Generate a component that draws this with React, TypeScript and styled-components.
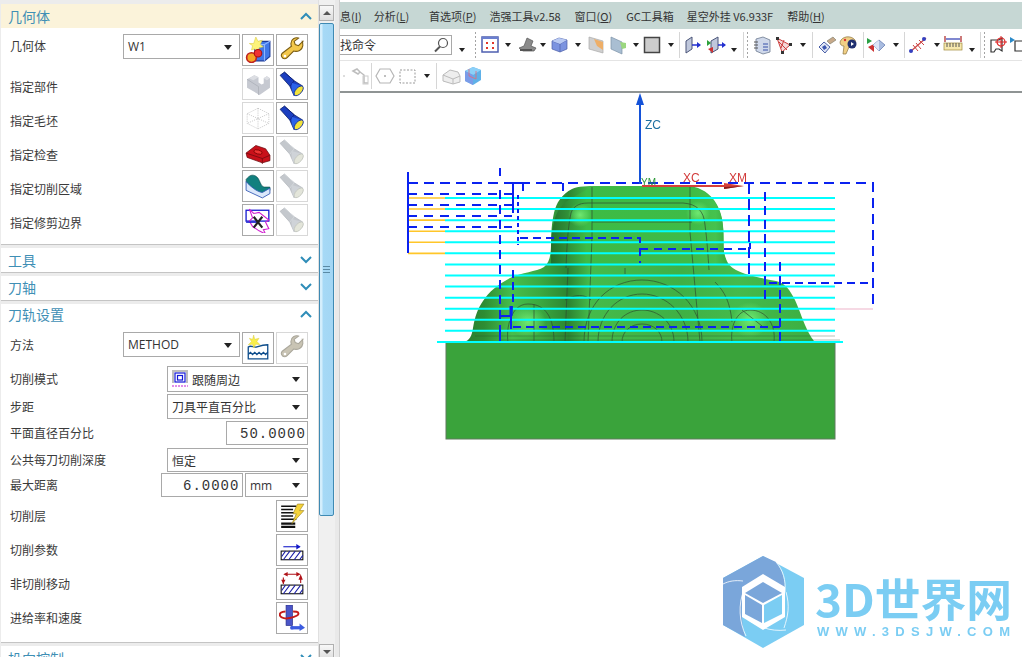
import React from "react";
import styled, { createGlobalStyle } from "styled-components";

const Global = createGlobalStyle`
  html, body { margin: 0; padding: 0; background: #fff; overflow: hidden; }
  #root { width: 1022px; height: 657px; overflow: hidden; }
  * { box-sizing: border-box; }
`;

const Page = styled.div`
  display: flex;
  width: 1022px;
  height: 657px;
  overflow: hidden;
  background: #fff;
  font-family: "Noto Sans CJK SC", "Noto Sans", sans-serif;
  font-size: 12px;
  color: #333;
`;
const Panel = styled.div`
  width: 318px;
  height: 657px;
  flex: none;
  overflow: hidden;
  background: #ececec;
  padding: 4px 0 0 1px;
`;
const Section = styled.section<{ $pb?: number }>`
  background: #fff;
  border-bottom: 1px solid #c4c4c4;
  margin-bottom: 3px;
  padding-bottom: ${(p) => p.$pb ?? 0}px;
`;
const Header = styled.div<{ $active?: boolean; $h?: number; $lift?: number }>`
  height: ${(p) => p.$h ?? 23}px;
  display: flex;
  align-items: center;
  justify-content: space-between;
  padding: 0 6px ${(p) => p.$lift ?? 0}px 7px;
  font-size: 14px;
  color: #3f8fb5;
  background: ${(p) => (p.$active ? "#fbf3da" : "#fff")};
`;
const Chevron = styled.svg`
  width: 12px;
  height: 8px;
  display: block;
`;
const Rows = styled.div<{ $top: number; $gap?: number }>`
  display: flex;
  flex-direction: column;
  gap: ${(p) => p.$gap ?? 2}px;
  padding: ${(p) => p.$top}px 10px 0 9px;
`;
const Row = styled.div<{ $h: number }>`
  height: ${(p) => p.$h}px;
  display: flex;
  align-items: flex-start;
  gap: 2px;
`;
const Label = styled.div<{ $h?: number; $shift?: number }>`
  flex: 1;
  height: ${(p) => p.$h ?? 32}px;
  line-height: ${(p) => p.$h ?? 32}px;
  padding-top: ${(p) => p.$shift ?? 0}px;
  font-size: 12px;
  color: #3a3a3a;
  white-space: nowrap;
`;
const IconBtn = styled.div<{ $off?: boolean }>`
  width: 32px;
  height: 32px;
  flex: none;
  display: flex;
  align-items: center;
  justify-content: center;
  background: #fff;
  border: 1px solid ${(p) => (p.$off ? "#d8d8d8" : "#a9a9a9")};
`;
const Select = styled.div<{ $w: number; $h: number; $font?: string }>`
  width: ${(p) => p.$w}px;
  height: ${(p) => p.$h}px;
  flex: none;
  display: flex;
  align-items: center;
  gap: 3px;
  padding: 0 4px;
  background: #fff;
  border: 1px solid #a9a9a9;
  font-family: ${(p) => p.$font ?? '"Noto Sans CJK SC", sans-serif'};
  font-size: 12px;
  color: #333;
  position: relative;
  &::after {
    content: "";
    position: absolute;
    right: 7px;
    top: 50%;
    margin-top: -2px;
    border: 4px solid transparent;
    border-bottom: 0;
    border-top: 5px solid #222;
  }
`;
const NumBox = styled.div<{ $w: number; $pl: number }>`
  width: ${(p) => p.$w}px;
  height: 24px;
  flex: none;
  background: #fff;
  border: 1px solid #a9a9a9;
  padding-left: ${(p) => p.$pl}px;
  padding-right: 2px;
  overflow: hidden;
  white-space: nowrap;
  line-height: 24px;
  font-family: "Liberation Mono", monospace;
  font-size: 14px;
  letter-spacing: 1px;
  color: #333;
`;
const NumClip = styled.div`
  overflow: hidden;
`;
const Track = styled.div`
  width: 17px;
  height: 657px;
  flex: none;
  background: #f0f0f0;
  border-left: 1px solid #e0e0e0;
  padding: 5px 1px 0 0;
  display: flex;
  flex-direction: column;
  align-items: stretch;
`;
const ScrollBtn = styled.div<{ $down?: boolean }>`
  height: 16px;
  flex: none;
  border: 1px solid #b0b0b0;
  background: linear-gradient(#f8f8f8, #dedede);
  display: flex;
  align-items: center;
  justify-content: center;
  &::after {
    content: "";
    border: 4px solid transparent;
    ${(p) => (p.$down ? "border-bottom:0;border-top:4px solid #555;" : "border-top:0;border-bottom:4px solid #555;")}
  }
`;
const Thumb = styled.div`
  height: 493px;
  margin: 2px 0 128px;
  flex: none;
  border: 1px solid #3f8ab3;
  border-radius: 2px;
  background: linear-gradient(90deg, #d4eefc 0 2px, #a6d9f6 3px, #a2d6f4 100%);
  display: flex;
  align-items: center;
  justify-content: center;
`;
const Grip = styled.div`
  width: 7px;
  height: 7px;
  border-top: 1px solid #5a8aa5;
  border-bottom: 1px solid #5a8aa5;
  position: relative;
  &::after {
    content: "";
    position: absolute;
    left: 0;
    right: 0;
    top: 2px;
    height: 1px;
    background: #5a8aa5;
  }
`;
const Strip = styled.div`
  width: 5px;
  height: 657px;
  flex: none;
  background: #e9e9e9;
  border-right: 1px solid #cfcfcf;
`;
const Main = styled.div`
  flex: 1;
  min-width: 0;
  height: 657px;
  display: flex;
  flex-direction: column;
  padding-top: 2px;
  background: #fff;
  position: relative;
`;
const MenuBar = styled.div`
  height: 27px;
  flex: none;
  background: #c6d7d4;
  display: flex;
  align-items: center;
  white-space: nowrap;
  font-size: 11px;
  color: #333;
  font-family: "Noto Sans CJK SC", sans-serif;
`;
const MenuItem = styled.span<{ $x: number }>`
  margin-left: ${(p) => p.$x}px;
  u { text-decoration: underline; }
`;
const ToolRow = styled.div<{ $h: number; $line?: boolean }>`
  height: ${(p) => p.$h}px;
  flex: none;
  display: flex;
  align-items: center;
  background: #fff;
  overflow: hidden;
  border-bottom: ${(p) => (p.$line ? "2px solid #8f9494" : "1px solid #e4e4e4")};
`;
const SearchBox = styled.div`
  width: 112px;
  height: 20px;
  flex: none;
  display: flex;
  align-items: center;
  justify-content: space-between;
  padding: 0 2px 0 0;
  border: 1px solid #a9a9a9;
  border-left: 0;
  font-size: 12px;
  color: #333;
`;
const Slot = styled.div<{ $ml: number; $w: number; $low?: boolean }>`
  margin-left: ${(p) => p.$ml}px;
  width: ${(p) => p.$w}px;
  height: 20px;
  flex: none;
  display: flex;
  align-items: center;
  justify-content: center;
  transform: translateY(${(p) => (p.$low ? 5 : 0)}px);
`;
const Caret = styled.div`
  border: 3px solid transparent;
  border-bottom: 0;
  border-top: 4px solid #222;
  width: 0;
`;
const GripBar = styled.div`
  width: 3px;
  height: 28px;
  background-image: radial-gradient(circle, #a4a4a4 1px, transparent 1.1px);
  background-size: 3px 4px;
`;
const Sep = styled.div`
  width: 1px;
  height: 26px;
  background: #d6d6d6;
`;
const Viewport = styled.div`
  flex: 1;
  min-height: 0;
  position: relative;
  overflow: hidden;
`;
const Scene = styled.svg`
  display: block;
  width: 682px;
  height: 564px;
`;

const Svg: React.FC<{ s?: number; children: React.ReactNode }> = ({ s = 24, children }) => (
  <svg width={s} height={s} viewBox="0 0 24 24">{children}</svg>
);

const Wrench = ({ off }: { off?: boolean }) => (
  <Svg s={26}>
    <path d="M22 4l-4 4-3-1-1-3 4-3c-3-1-7 1-7 5 0 1 0 2 .5 2.500L3 15c-2 2 0 5 2 5 1 0 2-.5 2.500-1l6-6c4 1 8-1 8.500-5 0-1.500 0-3-.5-4z"
      fill={off ? "#c9c4b4" : "#f3c84c"} stroke={off ? "#aaa79b" : "#7a5c12"} strokeWidth="1" />
    <circle cx="5.500" cy="17.500" r="1.200" fill="#fff" />
  </Svg>
);
const Torch = ({ off }: { off?: boolean }) => (
  <Svg s={26}>
    <path d="M1 4l4-3 9 8 8 5-8 9-4-9z" fill={off ? "#c4c8cd" : "#1c3fc0"} stroke={off ? "#b5b9be" : "#0b2066"} strokeWidth=".7" />
    <path d="M5 1l9 8-4 5" fill="none" stroke={off ? "#d8dbdf" : "#0a1c78"} strokeWidth=".7" />
    <path d="M12 11l10 3-8 9c-2-4-3-8-2-12z" fill={off ? "#cfd3d8" : "#2b62e8"} />
    <ellipse cx="18.200" cy="18.300" rx="5.500" ry="2.800" transform="rotate(-48 18.200 18.300)" fill={off ? "#e3e5da" : "#f2e23a"} stroke={off ? "#c4c7c0" : "#12309c"} strokeWidth=".8" />
  </Svg>
);
const GeomNew = () => (
  <Svg s={26}>
    <path d="M9 7l5-3h9v14l-5 4H9z" fill="#3f78e8" stroke="#1b3a9a" />
    <path d="M9 7h9v15M18 7l5-3" stroke="#8fb6ff" fill="none" />
    <path d="M10 0l2 4 4-1-2 4 3 2-4 1-1 4-3-3-3 1 1-4-3-2 4 0z" fill="#fdf37a" stroke="#d8c940" strokeWidth=".5" />
    <circle cx="6" cy="19" r="4.500" fill="#f5a623" stroke="#c0211f" strokeWidth="1.500" />
    <circle cx="12" cy="15" r="3.500" fill="#e33" stroke="#a11" />
  </Svg>
);
const BlockOff = () => (
  <Svg s={25}>
    <path d="M1 7l7-4 4 2v5l3 2 2-1V6l3-2 3 2v9l-10 7-12-7z" fill="#c6c9d1" />
    <path d="M8 3l4 2-5 3-4-2zM17 6l3-2 3 2-3 2z" fill="#dcdee3" />
    <path d="M1 7l11 7v8" stroke="#adb1b9" fill="none" strokeWidth=".8" />
  </Svg>
);
const DotCube = () => (
  <Svg s={26}>
    <path d="M12 3l10 5v9l-10 5-10-5V8zM2 8l20 9M22 8L2 17M12 3v19" fill="none" stroke="#bbb" strokeWidth=".7" strokeDasharray="1 1" />
  </Svg>
);
const RedBody = () => (
  <Svg s={26}>
    <path d="M1 13l9-7 9 3 4 6v5l-7 2-14-5z" fill="#c9101a" stroke="#6b0a10" strokeWidth=".7" />
    <path d="M1 13l15 5 7-3M16 18v5" stroke="#6b0a10" strokeWidth=".7" fill="none" />
    <ellipse cx="12" cy="12" rx="4" ry="1.800" fill="#e33" stroke="#700" strokeWidth=".7" transform="rotate(15 12 12)" />
  </Svg>
);
const TealSurface = () => (
  <Svg s={26}>
    <path d="M1 6c3-4 6-5 9-3 4 2 4 10 8 10h5v3l-7 4-14-6z" fill="#12807f" stroke="#0a4b4b" strokeWidth=".6" />
    <path d="M1 8v8l15 7 7-4v-5l-7 4C10 17 5 12 1 8z" fill="#dbe8fb" stroke="#3358b5" strokeWidth=".8" />
  </Svg>
);
const TrimIcon = () => (
  <Svg s={26}>
    <rect x="1" y="3" width="21" height="10" fill="#fff" stroke="#1419d0" strokeWidth="1.200" />
    <path d="M4 2l4 4 5-1 9 7-3 2 3 6-5 1 2 4-6-3-6-4-3-5 3-3z" fill="none" stroke="#d11fd0" strokeWidth="1" />
    <path d="M1 14h10" stroke="#1419d0" strokeWidth="1.200" />
    <path d="M8 9l8 10M16 9L8 19" stroke="#222" strokeWidth="2" />
  </Svg>
);
const WaterNew = () => (
  <Svg s={26}>
    <path d="M3 11c3-2 5 1 8 0s6-2 10-2v13H3z" fill="#fff" stroke="#0e4d8c" strokeWidth="1.200" />
    <path d="M3 18l2-2 2 2 2-2 2 2 2-2 2 2 2-2 2 2 2-2" fill="none" stroke="#0e4d8c" strokeWidth="1.200" />
    <path d="M8 0l1 4 4-1-2 3 3 3-4-.5L8 12 7 8.500 3 9l3-3-2-3 3 1z" fill="#f9ef4b" stroke="#d8c940" strokeWidth=".4" />
  </Svg>
);
const LayerIcon = () => (
  <Svg s={26}>
    <path d="M2 3h14M2 6h11M2 9h12M2 12h11M2 15h14" stroke="#111" strokeWidth="1.500" />
    <path d="M2 19h13M2 22h13" stroke="#111" strokeWidth="2" />
    <path d="M17 1h6l-4 6h4L12 19l4-9h-3z" fill="#f5d33a" stroke="#9a8420" strokeWidth=".6" />
  </Svg>
);
const Hatch = () => (
  <g>
    <rect x="2" y="13" width="20" height="8" fill="#fff" stroke="#111" strokeWidth="1" />
    <path d="M4 21l6-8M9 21l6-8M14 21l6-8M2.500 18l3.500-5M19 21l3-4" stroke="#1b1fa8" strokeWidth="1" />
  </g>
);
const ParamIcon = () => (
  <Svg s={26}>
    <Hatch />
    <path d="M4 9h15" stroke="#1218c8" strokeWidth="1" />
    <path d="M16 6.500L20 9l-4 2.500z" fill="#1218c8" />
  </Svg>
);
const MoveIcon = () => (
  <Svg s={26}>
    <Hatch />
    <path d="M4 6v6M20 11V5M7 3h10" stroke="#b01218" strokeWidth="1" />
    <path d="M2 8h4l-2 4zM18 8h4l-2-5zM8 1v4L4 3zM16 1v4l4-2z" fill="#b01218" />
  </Svg>
);
const FeedIcon = () => (
  <Svg s={26}>
    <rect x="6.500" y="0" width="6" height="19" fill="#4a55c8" stroke="#2a2f80" strokeWidth=".6" />
    <path d="M6 6c-4 0-6 2-5 4 1 2 5 3 9 2 4-1 8-2 8-4s-3-2-5-2" fill="none" stroke="#c41a1a" strokeWidth="1.800" />
    <path d="M13 21h7" stroke="#3c5ce0" strokeWidth="3" />
    <path d="M19 17l5 4-5 3z" fill="#3c5ce0" />
    <circle cx="12" cy="21" r="1.800" fill="#3c5ce0" />
  </Svg>
);
const FollowIcon = () => (
  <svg width="17" height="18" viewBox="0 0 17 18">
    <path d="M0 0h16v2H0zM0 0h2v13H0zM14 0h2v13h-2z" fill="#888" opacity=".55" />
    <rect x="3" y="3" width="10" height="9" fill="none" stroke="#1216d8" strokeWidth="1.200" />
    <rect x="5.500" y="5.500" width="5" height="4.500" fill="none" stroke="#1216d8" strokeWidth="1.200" />
    <path d="M0 16h16" stroke="#c41fd0" strokeWidth="1" strokeDasharray="2 1" />
  </svg>
);
const Search = () => (
  <svg width="16" height="16" viewBox="0 0 16 16">
    <circle cx="10" cy="6" r="4.500" fill="#fff" stroke="#555" strokeWidth="1.200" />
    <path d="M7 9.500L2 14.500" stroke="#555" strokeWidth="2" />
  </svg>
);

const T16: React.FC<{ children: React.ReactNode }> = ({ children }) => (
  <svg width="20" height="20" viewBox="0 0 20 20">{children}</svg>
);
const icons: Record<string, React.ReactNode> = {
  grid: <T16><rect x="2" y="2" width="16" height="15" fill="#fff" stroke="#4e5fb0" strokeWidth="1.500" /><path d="M2 3h16" stroke="#6a7fd0" strokeWidth="2" /><path d="M6 7h2v2H6zM12 7h2v2h-2zM6 12h2v2H6zM12 12h2v2h-2z" fill="#e2362b" /></T16>,
  printer: <T16><path d="M2 13l5-2 3-8 6 3-2 5 5 2-2 3H6z" fill="#8b8b8b" stroke="#555" strokeWidth=".7" /><path d="M3 14h12v2H3z" fill="#555" /></T16>,
  cube: <T16><path d="M2 6l7-3 8 2v9l-7 3-8-3z" fill="#7b93e0" stroke="#4c5fa8" strokeWidth=".7" /><path d="M2 6l8 3 7-4M10 9v8" stroke="#4c5fa8" fill="none" strokeWidth=".7" /><path d="M2 6l7-3 8 2-7 4z" fill="#b9caf3" /></T16>,
  pane: <T16><path d="M3 2l14 4v12L3 14z" fill="#cfcfcf" stroke="#aaa" strokeWidth=".7" /><path d="M8 4l9 3v8l-6-4z" fill="#eeae67" /></T16>,
  paneG: <T16><path d="M3 2l11 5v12L3 14z" fill="#a9bed2" stroke="#7d92a8" strokeWidth=".7" /><path d="M12 7l6 1v5l-4 1z" fill="#9bd77f" /></T16>,
  square: <T16><rect x="1.500" y="2.500" width="15" height="15" fill="#ccc" stroke="#444" strokeWidth="1.500" /></T16>,
  planeA: <T16><path d="M3 6l6-4v12l-6 4z" fill="#c0c8dc" stroke="#4a5578" /><path d="M9 10h8" stroke="#2330d0" strokeWidth="1.500" /><path d="M14 7l4 3-4 3z" fill="#2330d0" /></T16>,
  planeB: <T16><path d="M4 6l7-4v12l-7 4z" fill="#c0c8dc" stroke="#4a5578" /><path d="M0 5l4 3-4 3z" fill="#2ca03a" /><path d="M1 14l5-2v6z" fill="#c33" /><path d="M11 10h7" stroke="#2330d0" strokeWidth="1.500" /><path d="M15 7l4 3-4 3z" fill="#2330d0" /></T16>,
  book: <T16><path d="M4 4l7-2 7 3v12l-7 2-7-3z" fill="#cfd8ea" stroke="#6c7a8f" strokeWidth=".8" /><path d="M2 7h4M2 10h4M2 13h4" stroke="#555" /><path d="M11 9h5M11 12h5M11 15h5" stroke="#3651a8" /></T16>,
  redTri: <T16><path d="M3 3l13 7-8 7z" fill="#f4d8d8" stroke="#cc3b3b" /><path d="M2 2h3v3H2zM15 8h3v3h-3zM7 16h3v3H7z" fill="#333" /><path d="M5 7l8 8M10 5l-3 8" stroke="#cc3b3b" /></T16>,
  diag: <T16><path d="M2 12l5-5 6 5-5 6z" fill="#e0e6f4" stroke="#4a5fa8" /><path d="M5 12l3-2 2 3-3 2z" fill="#3b55b0" /><path d="M10 6l6-4 3 3-6 4z" fill="#c7a98a" stroke="#776" strokeWidth=".6" /></T16>,
  palette: <T16><path d="M1 7c2-6 11-7 15-2 2 4-1 7-6 7l-3 7H4l1-8c-2 0-4-1-4-4z" fill="#f0cf85" stroke="#8a7340" strokeWidth=".7" /><circle cx="13" cy="9" r="4.500" fill="#203070" /><path d="M12 7l3 2-3 2z" fill="#fff" /><circle cx="6" cy="5" r="1.200" fill="#d33" /></T16>,
  greenDiamond: <T16><path d="M0 3l5 3-5 3z" fill="#2aa043" /><path d="M1 12l6-3v8z" fill="#cc3333" /><path d="M6 10l6-5 6 5-6 6z" fill="#a9bce0" stroke="#6a80b5" strokeWidth=".8" /><path d="M6 10l6-5v11z" fill="#dde6f7" /></T16>,
  ruler: <T16><path d="M2 17L18 3" stroke="#c44" strokeWidth="1.200" /><path d="M5 10l5 6M8 8l5 6M11 5l5 5" stroke="#c44" /><circle cx="3" cy="16" r="2" fill="#3440c0" /><circle cx="16" cy="4" r="2" fill="#3440c0" /></T16>,
  measure: <T16><path d="M3 4h14" stroke="#2a38b0" strokeWidth="1.200" /><path d="M2 1v6M18 1v6" stroke="#a22" strokeWidth="1.200" /><rect x="1" y="8" width="18" height="7" fill="#f6e8ad" stroke="#a08a3a" strokeWidth=".7" /><path d="M4 8v4M7 8v4M10 8v4M13 8v4M16 8v4" stroke="#555" /></T16>,
  target: <T16><path d="M1 5h8l3-2v13l-3-2H6l-2 3H1z" fill="#fff" stroke="#333" strokeWidth="1.200" /><circle cx="11" cy="7" r="4" fill="none" stroke="#d22" strokeWidth="1.200" /><path d="M11 1v12M5 7h12" stroke="#d22" /></T16>,
  target2: <T16><path d="M0 2l5 3-5 3z" fill="#2b8ac9" /><path d="M5 6h8v10H5z" fill="#fff" stroke="#333" strokeWidth="1.200" /></T16>,
  robot: <T16><path d="M3 5l4-2 3 3-2 2zM10 6l4 3v8h4" stroke="#bdbdbd" strokeWidth="1.500" fill="none" /><rect x="13" y="10" width="5" height="8" fill="none" stroke="#ccc" /></T16>,
  dot: <T16><path d="M8 10h2" stroke="#bbb" /></T16>,
  hex: <T16><path d="M5 3h10l4 7-4 7H5l-4-7z" fill="#fff" stroke="#b5b5b5" strokeWidth="1.200" /><circle cx="10" cy="10" r="1" fill="#aaa" /></T16>,
  dash: <T16><rect x="2" y="4" width="15" height="13" fill="none" stroke="#999" strokeDasharray="2 1.500" /></T16>,
  greyBox: <T16><path d="M2 9l7-5 8 2 2 4v6l-7 2-10-3z" fill="#eee" stroke="#bbb" /><path d="M2 9l10 4 7-3M12 13v5" stroke="#bbb" fill="none" /></T16>,
  colorCube: <T16><path d="M2 5l8-4 8 3v10l-8 5-8-4z" fill="#5fb1e8" /><path d="M2 5l8 4 8-5-8-3z" fill="#8cd0f8" /><path d="M2 5v10l8 4V9z" fill="#7b9ce8" /><path d="M6 3v7l7 3V5" stroke="#e36b7a" fill="none" strokeWidth=".8" /></T16>,
};

type Item = [string, number, boolean?];
const row1: Item[] = [
  ["caret", 462, true], ["grip", 475], ["grid", 490], ["caret", 508], ["printer", 527], ["caret", 543], ["cube", 560], ["caret", 578],
  ["pane", 596], ["paneG", 618], ["caret", 636], ["square", 653], ["caret", 671], ["sep", 679], ["planeA", 693], ["planeB", 717], ["caret", 734, true],
  ["sep", 743], ["grip", 747], ["book", 762], ["redTri", 784], ["caret", 803], ["sep", 812], ["diag", 827], ["palette", 849], ["sep", 863],
  ["greenDiamond", 877], ["caret", 896], ["sep", 904], ["ruler", 918], ["caret", 937], ["measure", 953], ["caret", 972, true], ["sep", 980], ["grip", 984],
  ["target", 1000], ["target2", 1020],
];
const row2: Item[] = [
  ["dot", 345], ["robot", 360], ["sep", 371], ["hex", 385], ["dash", 408], ["caret", 427], ["sep", 436], ["greyBox", 451], ["colorCube", 473],
];
const widthOf = (k: string) => (k === "caret" ? 8 : k === "sep" ? 1 : k === "grip" ? 3 : 20);

const Tools: React.FC<{ items: Item[]; start: number }> = ({ items, start }) => {
  let end = start;
  return (
    <>
      {items.map(([k, c, low], i) => {
        const w = widthOf(k);
        const ml = Math.round(c - w / 2 - end);
        end = end + ml + w;
        return (
          <Slot key={i} $ml={ml} $w={w} $low={low}>
            {k === "caret" ? <Caret /> : k === "grip" ? <GripBar /> : k === "sep" ? <Sep /> : icons[k]}
          </Slot>
        );
      })}
    </>
  );
};

const Up = () => (
  <Chevron viewBox="0 0 12 8"><path d="M1 7l5-5 5 5" fill="none" stroke="#2f8db8" strokeWidth="2" /></Chevron>
);
const Down = () => (
  <Chevron viewBox="0 0 12 8"><path d="M1 1l5 5 5-5" fill="none" stroke="#2f8db8" strokeWidth="2" /></Chevron>
);

const cyanYs = Array.from({ length: 13 }, (_, i) => 198 + i * 11.07);

const Model = () => (
  <>
    <defs>
      <linearGradient id="tower" x1="0" x2="1" y1="0" y2="0">
        <stop offset="0" stopColor="#23702a" />
        <stop offset=".08" stopColor="#2f8a35" />
        <stop offset=".2" stopColor="#3dbb45" />
        <stop offset=".8" stopColor="#3fbb47" />
        <stop offset=".93" stopColor="#46c24e" />
        <stop offset="1" stopColor="#37a83f" />
      </linearGradient>
      <linearGradient id="lower" x1="0" x2="1" y1="0" y2="0">
        <stop offset="0" stopColor="#2a7a2e" />
        <stop offset=".06" stopColor="#2e8c33" />
        <stop offset=".14" stopColor="#47bf4d" />
        <stop offset=".22" stopColor="#3ba840" />
        <stop offset=".3" stopColor="#2c8431" />
        <stop offset=".36" stopColor="#45bb4a" />
        <stop offset=".62" stopColor="#3fb045" />
        <stop offset=".78" stopColor="#45ba4b" />
        <stop offset="1" stopColor="#3cae42" />
      </linearGradient>
      <radialGradient id="blob"><stop offset="0" stopColor="#6fe871" /><stop offset="1" stopColor="#6fe871" stopOpacity="0" /></radialGradient>
    </defs>
    <rect x="446" y="342" width="389" height="97" fill="#3aa33b" stroke="#5f7a5f" strokeWidth="1" />
    <path d="M463 342c7-1 9-7 10-14 2-12 5-20 10-27 6-9 14-16 27-23 12-6 26-6 34-11 6-5 7-13 7-24 0-10 1-22 3-30 2-10 8-19 18-24 6-3 16-3 25-3h90c10 0 20 5 27 14 5 7 8 15 9 26 1 10 0 18 1 26 2 10 6 15 12 18 9 5 25 8 40 11 7 2 11 5 15 12 6 9 9 20 14 32 3 7 7 14 10 17z" fill="url(#lower)" />
    <path d="M551 262c0-16 0-30 3-40 2-10 8-19 18-24 6-3 16-11 25-11h90c10 0 20 5 27 14 5 7 8 15 9 26 1 10 0 18 1 26 1 5 2 8 4 11H551z" fill="url(#tower)" />
    <ellipse cx="750" cy="320" rx="18" ry="18" fill="url(#blob)" />
    <ellipse cx="528" cy="322" rx="18" ry="16" fill="url(#blob)" />
    <ellipse cx="580" cy="215" rx="12" ry="12" fill="url(#blob)" />
    <ellipse cx="698" cy="213" rx="12" ry="12" fill="url(#blob)" />
    <g fill="none" stroke="#2d4a30" strokeWidth=".8" opacity=".85">
      <path d="M592 187v50M690 187v45M588 203c-10 0-15 4-17 10-3 14-4 30-5 55M588 203h95c14 1 21 8 22 22 2 14 3 30 4 45" />
      <path d="M592 222h100M592 237l-4 105M690 232l10 110M568 268l-3 74M625 268v6" />
      <path d="M500 340h340M475 336h360" opacity=".5" />
      <path d="M584 342c0-38 26-62 58-62s60 25 60 62M598 342c0-28 20-48 44-48s46 20 46 48M612 342c0-20 14-32 30-32s32 12 32 32M622 342c0-10 8-18 20-18s20 8 20 18" />
      <path d="M508 342c-2-12 2-38 20-38s26 14 26 38M534 304v38M732 342c-2-14 4-32 18-32 16 0 26 14 24 32M742 310l20 16M565 300c10-6 20-6 26 0M715 282c10 10 15 20 17 40" />
    </g>
    <g stroke="#00ffff" strokeWidth="2">
      {cyanYs.map((y) => <line key={y} x1="445" x2="835" y1={y} y2={y} />)}
      <line x1="437" x2="843" y1="342" y2="342" />
    </g>
    <g stroke="#ffc629" strokeWidth="1.600">
      {cyanYs.slice(0, 6).map((y) => <line key={y} x1="408" x2="445" y1={y} y2={y} />)}
    </g>
    <line x1="835" x2="873" y1="309" y2="309" stroke="#f6d9e4" strokeWidth="2" />
    <g fill="none" stroke="#0a22f0" strokeWidth="2">
      <path d="M408 172v81" />
      <path d="M408 183H873V309" strokeDasharray="10 6" />
      <path d="M408 194h104M408 205h104M408 216h104M408 227h104" strokeDasharray="9 7" />
      <path d="M500 168v8M500 190v140" strokeDasharray="9 6" />
      <path d="M513 183v30M523 183v8M563 183v8M513 205h-8M513 194h-8M513 183h10" />
      <path d="M518 195v50" strokeDasharray="4 3" />
      <path d="M520 238H640V263" strokeDasharray="8 5" />
      <path d="M640 249H750M750 249v-6" strokeDasharray="8 6" />
      <path d="M749 183v92" strokeDasharray="11 5" />
      <path d="M765 192v108" strokeDasharray="9 5" />
      <path d="M780 262v80" strokeDasharray="9 5" />
      <path d="M769 283H873" strokeDasharray="8 5" />
      <path d="M513 327H780" strokeDasharray="8 5" />
      <path d="M513 270v36" strokeDasharray="8 4" />
      <path d="M512 306l-1 10-3 0v0M500 327v14M511 316v13M501 316h7" />
      <path d="M511 306v10" strokeWidth="3" />
    </g>
    <line x1="640" x2="640" y1="100" y2="184" stroke="#1452d8" strokeWidth="2" />
    <path d="M640 93l4 12h-8z" fill="#1452d8" />
    <text x="645" y="129" fontFamily="Liberation Sans, sans-serif" fontSize="12" fill="#1c6fa0">ZC</text>
    <text x="683" y="182" fontFamily="Liberation Sans, sans-serif" fontSize="12" fill="#d23a3a">XC</text>
    <text x="729" y="182" fontFamily="Liberation Sans, sans-serif" fontSize="12" fill="#d23a3a">XM</text>
    <text x="641" y="186" fontFamily="Liberation Sans, sans-serif" fontSize="10" fill="#2e9a3a">YM</text>
    <path d="M642 185h82v-2l20 3-20 3v-2h-82z" fill="#d6403a" />
    <path d="M724 187l20-1-20 3z" fill="#8a1c1a" />
  </>
);

const Logo = () => (
  <g>
    <path d="M763 556l41 22v47l-41 23-40-23v-47z" fill="#7bcdf3" />
    <path d="M763 556l-40 22v47l22 12c-4-14-4-32-1-48l41 1c0-12-4-22-9-28z" fill="#7aa6da" />
    <path d="M776 562c7 8 10 18 9 30M723 584c6-3 12-4 20-3M744 590c-6 14-5 32 2 46M746 618c10 8 24 14 40 12M786 592c4 14 2 24-2 36" stroke="#fff" strokeWidth=".8" fill="none" />
    <path d="M763 574l22 13v30l-22 13-21-13v-30z" fill="#fff" />
    <path d="M763 582l19 11-19 10-18-10z" fill="#7aa6da" />
    <path d="M745 595l17 10v18l-17-9z" fill="#7aa6da" />
    <path d="M782 595l-18 10v18l18-9z" fill="#7bcdf3" />
    <text x="815" y="617" fontFamily="Noto Sans CJK SC, sans-serif" fontWeight="700" fontSize="45" fill="#7bcdf3" textLength="197" lengthAdjust="spacingAndGlyphs">3D世界网</text>
    <text x="817" y="636" fontFamily="Liberation Sans, sans-serif" fontWeight="700" fontSize="13" fill="#7bcdf3" textLength="193">WWW.3DSJW.COM</text>
  </g>
);

export default function App() {
  return (
    <Page>
      <Global />
      <Panel>
        <Section $pb={8}>
          <Header $active $h={24}>几何体<Up /></Header>
          <Rows $top={6}>
            <Row $h={32}>
              <Label $h={24}>几何体</Label>
              <Select $w={117} $h={25} $font='"Open Sans", sans-serif'>W1</Select>
              <IconBtn><GeomNew /></IconBtn>
              <IconBtn><Wrench /></IconBtn>
            </Row>
            <Row $h={32}><Label $shift={3}>指定部件</Label><IconBtn $off><BlockOff /></IconBtn><IconBtn><Torch /></IconBtn></Row>
            <Row $h={32}><Label $shift={3}>指定毛坯</Label><IconBtn $off><DotCube /></IconBtn><IconBtn><Torch /></IconBtn></Row>
            <Row $h={32}><Label $shift={3}>指定检查</Label><IconBtn><RedBody /></IconBtn><IconBtn $off><Torch off /></IconBtn></Row>
            <Row $h={32}><Label $shift={3}>指定切削区域</Label><IconBtn><TealSurface /></IconBtn><IconBtn $off><Torch off /></IconBtn></Row>
            <Row $h={32}><Label $shift={3}>指定修剪边界</Label><IconBtn><TrimIcon /></IconBtn><IconBtn $off><Torch off /></IconBtn></Row>
          </Rows>
        </Section>
        <Section><Header $h={24}>工具<Down /></Header></Section>
        <Section><Header $h={24} $lift={2}>刀轴<Down /></Header></Section>
        <Section $pb={8}>
          <Header $h={22} $lift={2}>刀轨设置<Up /></Header>
          <Rows $top={6}>
            <Row $h={32}>
              <Label $h={25}>方法</Label>
              <Select $w={117} $h={25} $font='"Open Sans", sans-serif'>METHOD</Select>
              <IconBtn><WaterNew /></IconBtn>
              <IconBtn $off><Wrench off /></IconBtn>
            </Row>
            <Row $h={26}>
              <Label $h={26}>切削模式</Label>
              <Select $w={141} $h={26}><FollowIcon />跟随周边</Select>
            </Row>
            <Row $h={25}>
              <Label $h={25}>步距</Label>
              <Select $w={141} $h={25}>刀具平直百分比</Select>
            </Row>
            <Row $h={25}>
              <Label $h={24}>平面直径百分比</Label>
              <NumBox $w={82} $pl={13}><NumClip>50.00000</NumClip></NumBox>
            </Row>
            <Row $h={23}>
              <Label $h={23}>公共每刀切削深度</Label>
              <Select $w={141} $h={24}>恒定</Select>
            </Row>
            <Row $h={25}>
              <Label $h={24}>最大距离</Label>
              <NumBox $w={82} $pl={21}><NumClip>6.00000</NumClip></NumBox>
              <Select $w={63} $h={24} $font='"Open Sans", sans-serif'>mm</Select>
            </Row>
            <Row $h={32}><Label>切削层</Label><IconBtn><LayerIcon /></IconBtn></Row>
            <Row $h={32}><Label>切削参数</Label><IconBtn><ParamIcon /></IconBtn></Row>
            <Row $h={32}><Label>非切削移动</Label><IconBtn><MoveIcon /></IconBtn></Row>
            <Row $h={32}><Label>进给率和速度</Label><IconBtn><FeedIcon /></IconBtn></Row>
          </Rows>
        </Section>
        <Section><Header $h={24}>投向控制<Down /></Header></Section>
      </Panel>
      <Track>
        <ScrollBtn />
        <Thumb><Grip /></Thumb>
        <ScrollBtn $down />
      </Track>
      <Strip />
      <Main>
        <MenuBar>
          <MenuItem $x={0}>息(<u>I</u>)</MenuItem>
          <MenuItem $x={12}>分析(<u>L</u>)</MenuItem>
          <MenuItem $x={20}>首选项(<u>P</u>)</MenuItem>
          <MenuItem $x={13}>浩强工具v2.58</MenuItem>
          <MenuItem $x={14}>窗口(<u>O</u>)</MenuItem>
          <MenuItem $x={14}>GC工具箱</MenuItem>
          <MenuItem $x={13}>星空外挂 V6.933F</MenuItem>
          <MenuItem $x={14}>帮助(<u>H</u>)</MenuItem>
        </MenuBar>
        <ToolRow $h={32}>
          <SearchBox>找命令<Search /></SearchBox>
          <Tools items={row1} start={452} />
        </ToolRow>
        <ToolRow $h={32} $line>
          <Tools items={row2} start={340} />
        </ToolRow>
        <Viewport>
          <Scene viewBox="340 93 682 564">
            <Model />
            <Logo />
          </Scene>
        </Viewport>
      </Main>
    </Page>
  );
}
